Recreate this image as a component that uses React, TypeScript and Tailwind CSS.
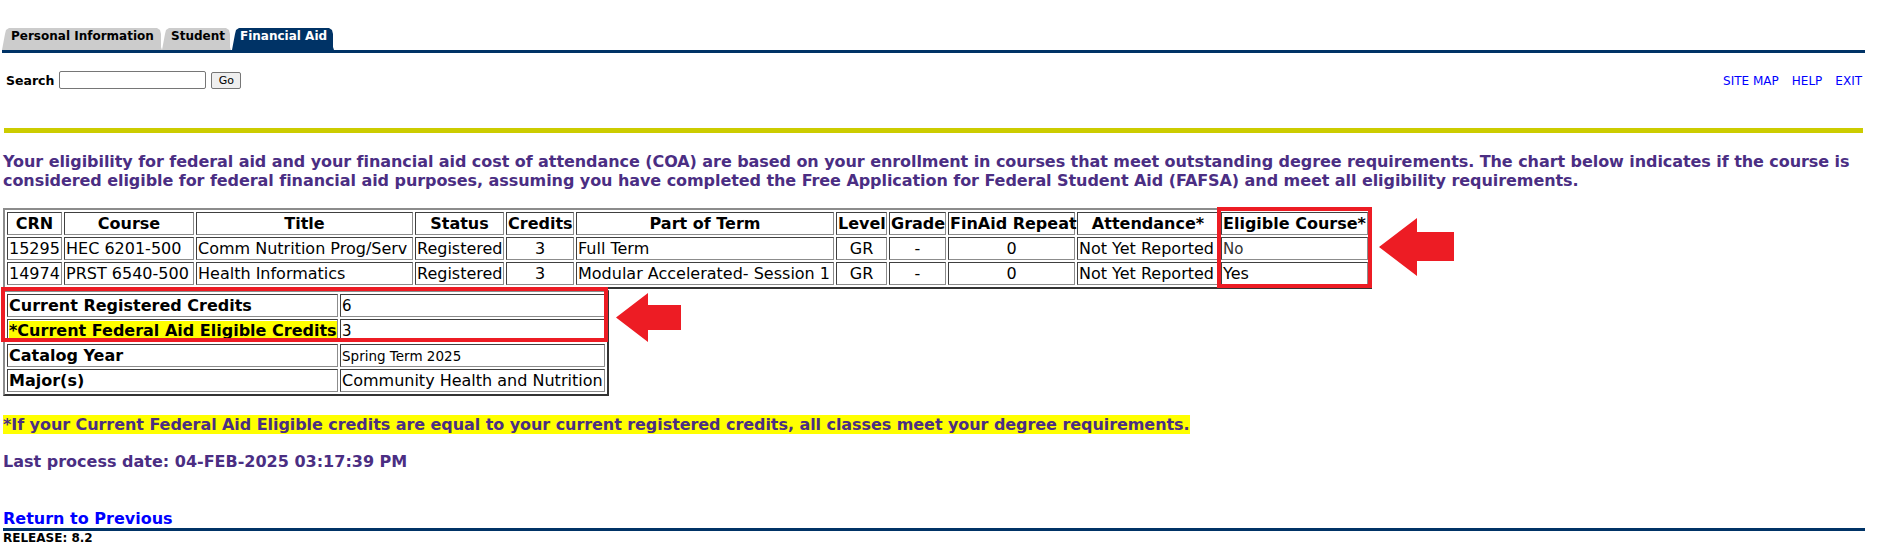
import React from "react";

const cellBase =
  "border border-[#404040] border-b-[#8c8c8c] border-r-[#8c8c8c] px-px py-px text-[16px] whitespace-nowrap overflow-visible align-middle";
const th = `${cellBase} font-bold text-center`;
const td = `${cellBase} text-left`;
const tdc = `${cellBase} text-center`;

const rows = [
  ["15295", "HEC 6201-500", "Comm Nutrition Prog/Serv", "Registered", "3", "Full Term", "GR", "-", "0", "Not Yet Reported", "No"],
  ["14974", "PRST 6540-500", "Health Informatics", "Registered", "3", "Modular Accelerated- Session 1", "GR", "-", "0", "Not Yet Reported", "Yes"],
];

function C({ children }: { children: React.ReactNode }) {
  return <div className="h-[19px] leading-[19px] overflow-visible">{children}</div>;
}

export default function App() {
  return (
    <div className="relative w-[1877px] h-[551px] overflow-hidden bg-white text-black font-['DejaVu_Sans',sans-serif]">
      {/* Tabs */}
      <div className="pt-[28px] pl-[2px] flex h-[50px]">
        <div className="w-[160px] h-[22px] bg-[#cccccc] pl-[9px] pt-px text-[12px] leading-[14px] font-bold text-black whitespace-nowrap [clip-path:polygon(0_100%,3px_6px,4px_2px,7px_0,calc(100%_-_5px)_0,calc(100%_-_2px)_2px,calc(100%_-_1px)_6px,calc(100%_-_1px)_calc(100%_-_3px),100%_100%)]">
          Personal Information
        </div>
        <div className="w-[69px] h-[22px] bg-[#cccccc] pl-[9px] pt-px text-[12px] leading-[14px] font-bold text-black whitespace-nowrap [clip-path:polygon(0_100%,3px_6px,4px_2px,7px_0,calc(100%_-_5px)_0,calc(100%_-_2px)_2px,calc(100%_-_1px)_6px,calc(100%_-_1px)_calc(100%_-_3px),100%_100%)]">
          Student
        </div>
        <div className="ml-px w-[102px] h-[22px] bg-[#003366] pl-[8px] pt-px text-[12px] leading-[14px] font-bold text-white whitespace-nowrap [clip-path:polygon(0_100%,3px_6px,4px_2px,7px_0,calc(100%_-_5px)_0,calc(100%_-_2px)_2px,calc(100%_-_1px)_6px,calc(100%_-_1px)_calc(100%_-_3px),100%_100%)]">
          Financial Aid
        </div>
      </div>
      <div className="ml-[2px] w-[1863px] h-[3px] bg-[#003366]" />

      {/* Search row */}
      <div className="mt-[18px] w-[1865px] h-[18px] flex items-center justify-between pl-[6px] pr-[3px]">
        <div className="flex items-center">
          <span className="text-[12.5px] leading-[15px] font-bold">Search</span>
          <input
            type="text"
            className="ml-[5px] w-[147px] h-[18px] bg-white border border-[#767676] rounded-[2px] outline-none"
          />
          <button className="ml-[5px] w-[30px] h-[17px] bg-[#efefef] border border-[#767676] rounded-[2px] text-[11px] leading-[13px] text-black">
            Go
          </button>
        </div>
        <div className="flex gap-[13px] text-[12px] leading-[14px] text-[#0000ff] pt-[2px]">
          <a>SITE MAP</a>
          <a>HELP</a>
          <a>EXIT</a>
        </div>
      </div>

      <div className="mt-[39px] ml-[4px] w-[1859px] h-[5px] bg-[#cccc00]" />

      {/* Intro */}
      <div className="mt-[19px] pl-[3px] text-[16px] leading-[19px] font-bold tracking-[-0.065px] text-[#4b2e83] whitespace-nowrap">
        <div>
          Your eligibility for federal aid and your financial aid cost of attendance (COA) are based on your enrollment in courses that meet outstanding degree requirements. The chart below indicates if the course is
        </div>
        <div>
          considered eligible for federal financial aid purposes, assuming you have completed the Free Application for Federal Student Aid (FAFSA) and meet all eligibility requirements.
        </div>
      </div>

      {/* Course table */}
      <table className="mt-[18px] ml-[3px] w-[1369px] table-fixed border-separate border-spacing-[2px] border-2 border-[#8c8c8c] border-b-[#333333] border-r-[#333333]">
        <thead>
          <tr>
            <th className={`${th} w-[55px]`}><C>CRN</C></th>
            <th className={`${th} w-[130px]`}><C>Course</C></th>
            <th className={`${th} w-[217px]`}><C>Title</C></th>
            <th className={`${th} w-[89px]`}><C>Status</C></th>
            <th className={`${th} w-[68px]`}><C>Credits</C></th>
            <th className={`${th} w-[258px]`}><C>Part of Term</C></th>
            <th className={`${th} w-[51px]`}><C>Level</C></th>
            <th className={`${th} w-[57px]`}><C>Grade</C></th>
            <th className={`${th} w-[127px]`}><C>FinAid Repeat</C></th>
            <th className={`${th} w-[142px]`}><C>Attendance*</C></th>
            <th className={`${th} w-[147px]`}><C>Eligible Course*</C></th>
          </tr>
        </thead>
        <tbody>
          {rows.map((r) => (
            <tr key={r[0]}>
              <td className={td}><C>{r[0]}</C></td>
              <td className={td}><C>{r[1]}</C></td>
              <td className={td}><C>{r[2]}</C></td>
              <td className={td}><C>{r[3]}</C></td>
              <td className={tdc}><C>{r[4]}</C></td>
              <td className={td}><C>{r[5]}</C></td>
              <td className={tdc}><C>{r[6]}</C></td>
              <td className={tdc}><C>{r[7]}</C></td>
              <td className={tdc}><C>{r[8]}</C></td>
              <td className={td}><C>{r[9]}</C></td>
              <td className={td}>
                <C>
                  {r[10] === "No" ? (
                    <span className="text-[15px] text-[#333333]">No</span>
                  ) : (
                    r[10]
                  )}
                </C>
              </td>
            </tr>
          ))}
        </tbody>
      </table>

      {/* Credits table */}
      <table className="mt-px ml-[3px] w-[606px] table-fixed border-separate border-spacing-[2px] border-2 border-[#8c8c8c] border-b-[#333333] border-r-[#333333]">
        <tbody>
          <tr>
            <td className={`${td} w-[331px] font-bold`}><C>Current Registered Credits</C></td>
            <td className={`${td} w-[265px]`}>
              <C><span className="text-[15px]">6</span></C>
            </td>
          </tr>
          <tr>
            <td className={`${td} font-bold`}>
              <C><span className="bg-[#ffff00]">*Current Federal Aid Eligible Credits</span></C>
            </td>
            <td className={td}>
              <C><span className="text-[15px]">3</span></C>
            </td>
          </tr>
          <tr>
            <td className={`${td} font-bold`}><C>Catalog Year</C></td>
            <td className={td}>
              <C><span className="text-[13.5px]">Spring Term 2025</span></C>
            </td>
          </tr>
          <tr>
            <td className={`${td} font-bold`}><C>Major(s)</C></td>
            <td className={td}><C>Community Health and Nutrition</C></td>
          </tr>
        </tbody>
      </table>

      {/* Note */}
      <div className="mt-[19px] pl-[3px] text-[16px] leading-[19px] font-bold tracking-[-0.065px] text-[#4b2e83] whitespace-nowrap">
        <span className="bg-[#ffff00]">
          *If your Current Federal Aid Eligible credits are equal to your current registered credits, all classes meet your degree requirements.
        </span>
      </div>

      <div className="mt-[18px] pl-[3px] text-[16px] leading-[19px] font-bold text-[#4b2e83]">
        Last process date: 04-FEB-2025 03:17:39 PM
      </div>

      <div className="mt-[38px] pl-[3px] text-[16px] leading-[19px] font-bold">
        <a className="text-[#0000ff]">Return to Previous</a>
      </div>
      <div className="ml-[3px] w-[1862px] h-[3px] bg-[#003366]" />
      <div className="pl-[3px] text-[12px] leading-[14px] font-bold text-black">RELEASE: 8.2</div>

      {/* Annotation overlays */}
      <div className="absolute left-[1217px] top-[207px] w-[155px] h-[81px] border-4 border-[#ed1c24] pointer-events-none" />
      <div className="absolute left-[1px] top-[287px] w-[607px] h-[55px] border-4 border-[#ed1c24] pointer-events-none" />
      <svg className="absolute left-[1379px] top-[218px]" width="75" height="58" viewBox="0 0 75 58">
        <polygon points="0,29 38,0 38,14 75,14 75,43 38,43 38,58" fill="#ed1c24" />
      </svg>
      <svg className="absolute left-[616px] top-[293px]" width="65" height="49" viewBox="0 0 65 49">
        <polygon points="0,24.5 32,0 32,12 65,12 65,37 32,37 32,49" fill="#ed1c24" />
      </svg>
    </div>
  );
}
